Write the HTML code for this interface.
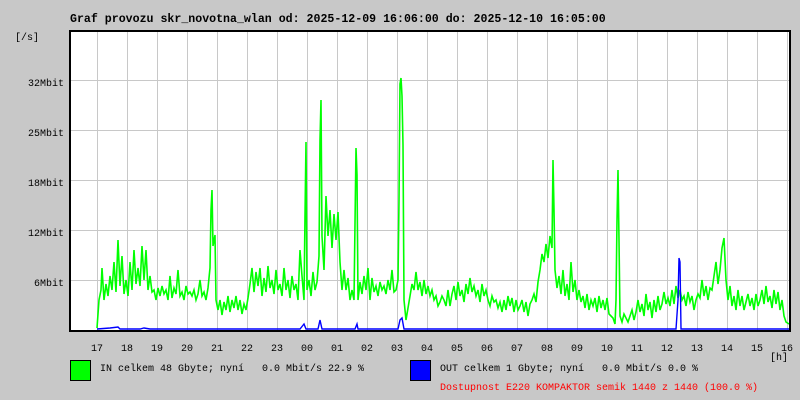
<!DOCTYPE html>
<html><head><meta charset="utf-8"><style>
html,body{margin:0;padding:0;background:#c8c8c8;}
svg{display:block}
text{font-family:"Liberation Mono","DejaVu Sans Mono",monospace;font-size:10px;fill:#000;white-space:pre}
</style></head><body>
<svg width="800" height="400" viewBox="0 0 800 400" xmlns="http://www.w3.org/2000/svg" xml:space="preserve">
<rect width="800" height="400" fill="#c8c8c8"/>
<text x="70" y="22" font-weight="bold" style="font-size:11.6px">Graf provozu skr_novotna_wlan od: 2025-12-09 16:06:00 do: 2025-12-10 16:05:00</text>
<text x="15" y="40">[/s]</text>
<rect x="70" y="30" width="720" height="300" fill="#fff"/>
<g stroke="#c8c8c8" stroke-width="1">
<path d="M70.5 80.5H790M70.5 130.5H790M70.5 180.5H790M70.5 230.5H790M70.5 280.5H790"/>
<path d="M97.5 30V330M127.5 30V330M157.5 30V330M187.5 30V330M217.5 30V330M247.5 30V330M277.5 30V330M307.5 30V330M337.5 30V330M367.5 30V330M397.5 30V330M427.5 30V330M457.5 30V330M487.5 30V330M517.5 30V330M547.5 30V330M577.5 30V330M607.5 30V330M637.5 30V330M667.5 30V330M697.5 30V330M727.5 30V330M757.5 30V330M787.5 30V330"/>
</g>
<g text-anchor="end">
<text x="64" y="86">32Mbit</text><text x="64" y="136">25Mbit</text><text x="64" y="186">18Mbit</text><text x="64" y="236">12Mbit</text><text x="64" y="286">6Mbit</text>
</g>
<polyline fill="none" stroke="#00ff00" stroke-width="1.6" points="97,328 99,300 101,290 102,268 104,300 106,284 108,296 110,276 112,290 114,262 116,292 118,240 120,286 122,256 124,294 126,280 128,296 130,262 132,290 134,250 136,284 138,268 140,286 142,246 144,280 146,250 148,290 150,276 152,292 154,290 156,300 158,288 160,296 162,286 164,294 166,290 168,300 170,276 172,298 174,288 176,294 178,270 180,296 182,292 184,300 186,286 188,294 190,292 192,296 194,290 196,300 198,294 200,280 202,296 204,292 206,300 208,288 210,268 211,210 212,190 213,246 215,235 216,300 218,310 220,300 222,315 224,302 226,310 228,296 230,312 232,300 234,308 236,296 238,310 240,300 242,314 244,304 246,310 248,298 250,284 252,268 254,292 256,272 258,286 260,268 262,296 264,278 266,292 268,266 270,288 272,280 274,294 276,270 278,290 280,284 282,296 284,268 286,290 288,280 290,298 292,276 294,290 296,284 298,300 300,250 302,276 304,300 305,216 306,142 307,290 309,280 311,296 313,272 315,290 317,282 319,256 320,140 321,100 322,236 324,270 326,196 328,236 330,210 332,248 334,214 336,240 338,212 340,262 342,290 344,270 346,290 348,278 350,300 352,290 354,300 356,148 357,175 358,300 360,282 362,294 364,276 366,290 368,268 370,300 372,278 374,292 376,286 378,296 380,282 382,290 384,286 386,294 388,280 390,290 392,270 394,292 396,290 398,280 399,200 400,84 401,78 402,96 403,145 404,300 406,320 408,308 410,296 412,284 414,290 416,272 418,290 420,282 422,296 424,280 426,294 428,286 430,296 432,290 434,300 436,296 438,306 440,302 442,296 444,300 446,306 448,290 450,306 452,294 454,286 456,300 458,282 460,296 462,290 464,302 466,284 468,294 470,278 472,292 474,286 476,296 478,290 480,302 482,284 484,296 486,290 488,300 490,306 492,296 494,302 496,300 498,308 500,302 502,312 504,300 506,310 508,296 510,306 512,298 514,312 516,300 518,310 520,306 522,300 524,312 526,302 528,316 530,304 532,300 534,294 536,302 538,282 540,270 542,254 544,262 546,244 548,258 550,236 552,248 553,160 554,210 555,270 557,288 559,276 561,294 563,270 565,296 567,284 569,300 571,262 573,292 575,280 577,300 579,290 581,302 583,296 585,308 587,294 589,310 591,300 593,306 595,298 597,312 599,296 601,308 603,300 605,310 607,298 609,314 611,316 613,318 615,324 616,300 617,220 618,170 619,240 620,316 622,322 624,314 626,318 628,322 630,316 632,310 634,320 636,312 638,300 640,312 642,304 644,316 646,294 648,310 650,302 652,318 654,300 656,312 658,296 660,310 662,304 664,292 666,304 668,298 670,306 672,290 674,304 676,286 678,298 680,290 682,300 684,296 686,306 688,292 690,302 692,296 694,310 696,300 698,294 700,298 702,280 704,296 706,286 708,300 710,288 712,290 714,276 716,262 718,284 720,270 722,248 724,238 726,280 728,300 730,286 732,306 734,296 736,310 738,290 740,306 742,296 744,310 746,302 748,294 750,306 752,298 754,310 756,294 758,306 760,300 762,290 764,304 766,286 768,302 770,296 772,308 774,290 776,304 778,292 780,310 782,300 784,316 786,322 789,324"/>
<polyline fill="none" stroke="#0000ff" stroke-width="1.4" points="97,329 110,328 118,327 120,329 140,329 144,328 150,329 300,329 304,324 306,329 318,329 320,320 322,329 355,329 357,324 358,329 398,329 400,320 402,318 404,329 676,329 678,300 679,258 680,262 681,329 789,329"/>
<path d="M70 31H790V331H70Z" fill="none" stroke="#000" stroke-width="2"/>
<g text-anchor="middle">
<text x="97" y="351">17</text><text x="127" y="351">18</text><text x="157" y="351">19</text><text x="187" y="351">20</text><text x="217" y="351">21</text><text x="247" y="351">22</text><text x="277" y="351">23</text><text x="307" y="351">00</text><text x="337" y="351">01</text><text x="367" y="351">02</text><text x="397" y="351">03</text><text x="427" y="351">04</text><text x="457" y="351">05</text><text x="487" y="351">06</text><text x="517" y="351">07</text><text x="547" y="351">08</text><text x="577" y="351">09</text><text x="607" y="351">10</text><text x="637" y="351">11</text><text x="667" y="351">12</text><text x="697" y="351">13</text><text x="727" y="351">14</text><text x="757" y="351">15</text><text x="787" y="351">16</text>
</g>
<text x="770" y="360">[h]</text>
<rect x="70.5" y="360.5" width="20" height="20" fill="#00ff00" stroke="#000"/>
<text x="100" y="371">IN celkem 48 Gbyte; nyní   0.0 Mbit/s 22.9 %</text>
<rect x="410.5" y="360.5" width="20" height="20" fill="#0000ff" stroke="#000"/>
<text x="440" y="371">OUT celkem 1 Gbyte; nyní   0.0 Mbit/s 0.0 %</text>
<text x="440" y="390" style="fill:#ff0000">Dostupnost E220 KOMPAKTOR semik 1440 z 1440 (100.0 %)</text>
</svg>
</body></html>
